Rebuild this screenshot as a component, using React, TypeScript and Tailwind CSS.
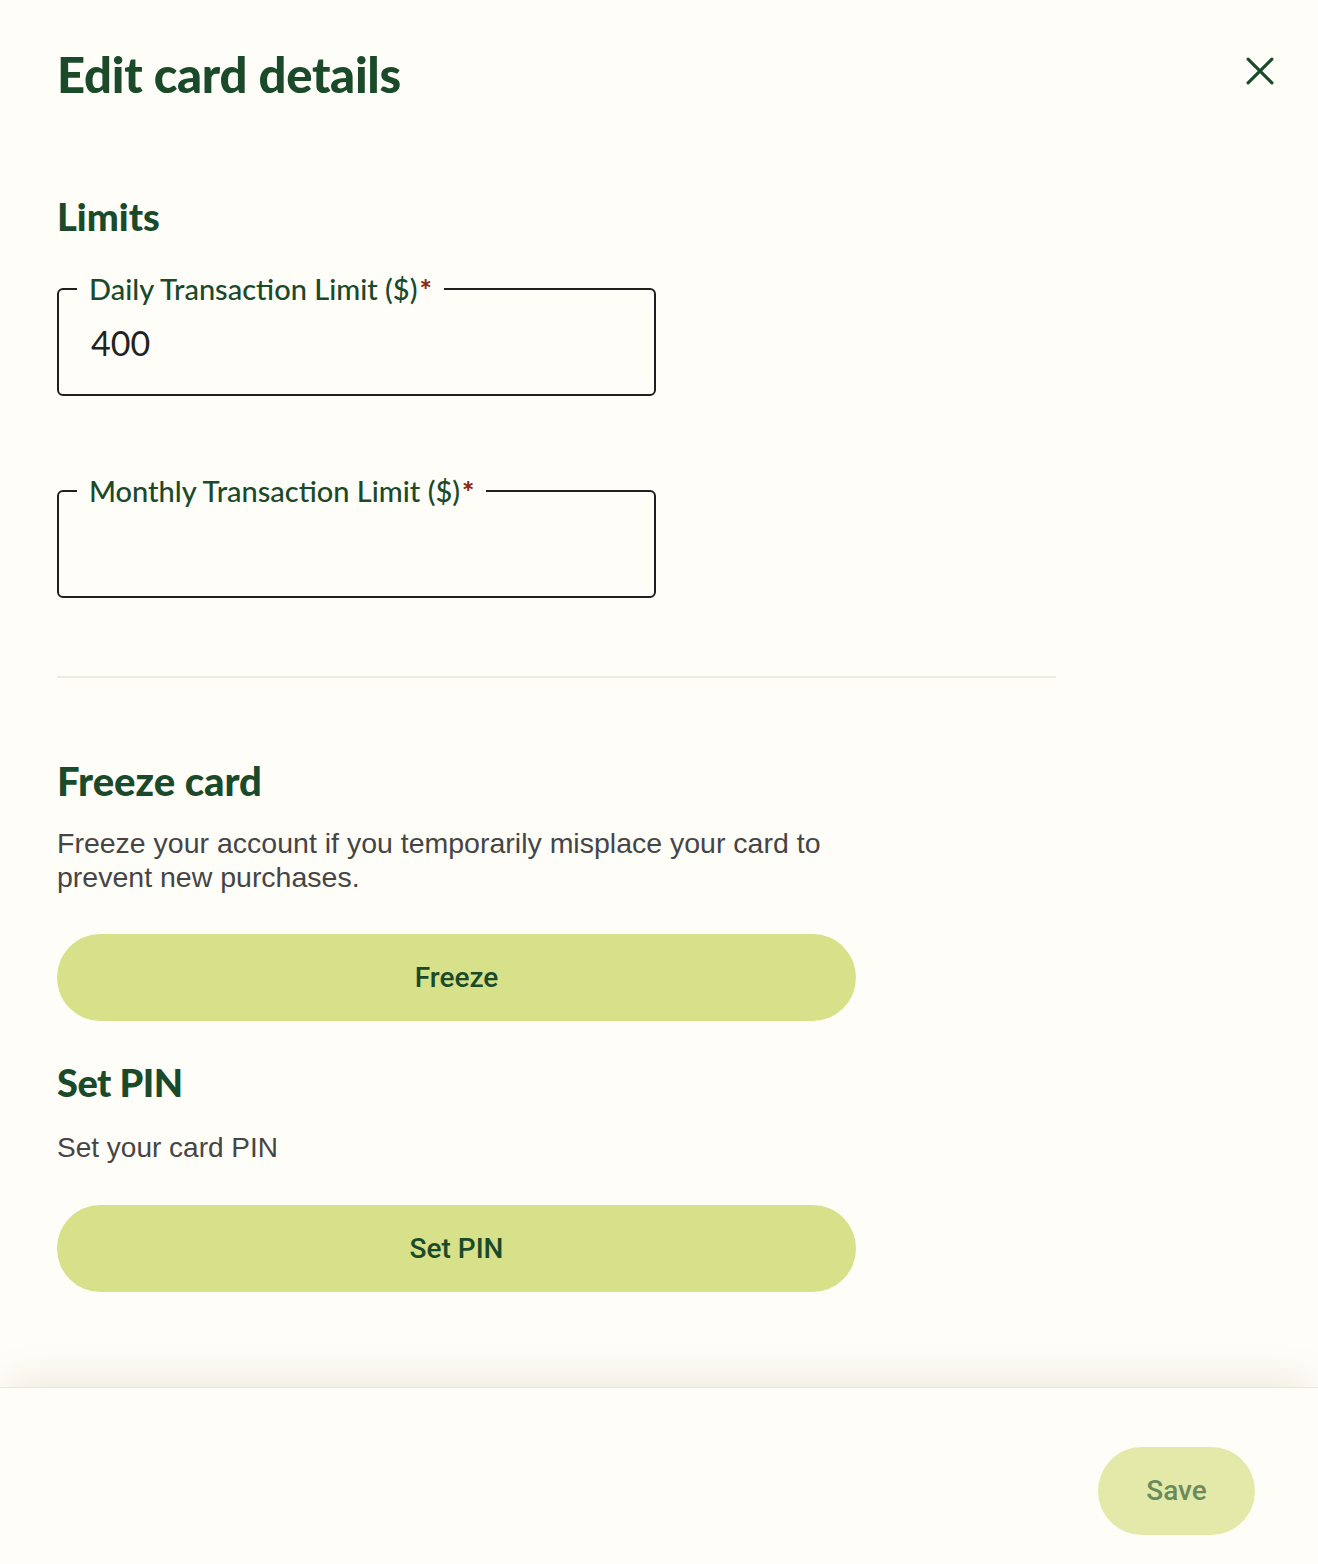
import React, { useState } from 'react';

const GREEN = 'text-[#1a4a2a]';

interface LimitFieldProps {
  label: string;
  value: string;
  onChange: (v: string) => void;
}

const LimitField: React.FC<LimitFieldProps> = ({ label, value, onChange }) => {
  return (
    <fieldset className="w-[599px] h-[122px] rounded-[6px] border-2 border-[#1f1f1f] px-[18px] pb-0 m-0">
      <legend className={`px-[12px] text-[29px] leading-[30px] font-medium ${GREEN} font-['Lato',sans-serif]`}>
        {label}
        <span className="ml-[2px] text-[#8a2a12] text-[29px] font-black">*</span>
      </legend>
      <input
        type="text"
        value={value}
        onChange={(e) => onChange(e.target.value)}
        className="w-full bg-transparent outline-none mt-[13px] pl-[14px] text-[34px] text-[#222] font-['Lato',sans-serif]"
      />
    </fieldset>
  );
};

export default function App() {
  const [daily, setDaily] = useState('400');
  const [monthly, setMonthly] = useState('');

  return (
    <div className="w-[1318px] h-[1564px] bg-[#fefdf8] flex flex-col font-['Liberation_Sans',sans-serif]">
      {/* Scrollable body */}
      <div className="flex-1 px-[57px] pt-[44px]">
        <div className="flex items-start justify-between">
          <h1 className={`text-[49px] leading-[60px] font-black tracking-[-0.3px] ${GREEN} font-['Lato',sans-serif]`}>
            Edit card details
          </h1>
          <button type="button" className={`mt-[5px] mr-[-21px] ${GREEN}`} aria-label="Close">
            <svg width="44" height="44" viewBox="0 0 24 24" fill="none" stroke="currentColor" strokeWidth={1.7} strokeLinecap="round">
              <path d="M5.5 5.5l13 13M18.5 5.5l-13 13" />
            </svg>
          </button>
        </div>

        {/* Limits */}
        <h2 className={`mt-[89px] text-[38px] leading-[46px] font-black ${GREEN} font-['Lato',sans-serif]`}>Limits</h2>
        <div className="mt-[35px] flex flex-col gap-[80px]">
          <LimitField label="Daily Transaction Limit ($)" value={daily} onChange={setDaily} />
          <LimitField label="Monthly Transaction Limit ($)" value={monthly} onChange={setMonthly} />
        </div>

        <div className="mt-[78px] w-[999px] h-[2px] bg-[#efebe0]" />

        {/* Freeze */}
        <h2 className={`mt-[80px] text-[40px] leading-[46px] font-black ${GREEN} font-['Lato',sans-serif]`}>Freeze card</h2>
        <p className="mt-[22px] w-[800px] text-[28.5px] leading-[34px] text-[#454545]">
          Freeze your account if you temporarily misplace your card to prevent new purchases.
        </p>
        <button
          type="button"
          className={`mt-[40px] w-[799px] h-[87px] rounded-full bg-[#d6e189] text-[28px] font-medium ${GREEN} font-['Roboto',sans-serif]`}
        >
          Freeze
        </button>

        {/* PIN */}
        <h2 className={`mt-[38px] text-[38px] leading-[46px] font-black tracking-[-0.5px] ${GREEN} font-['Lato',sans-serif]`}>Set PIN</h2>
        <p className="mt-[26px] text-[28px] leading-[34px] text-[#454545]">Set your card PIN</p>
        <button
          type="button"
          className={`mt-[40px] w-[799px] h-[87px] rounded-full bg-[#d6e189] text-[28px] font-medium ${GREEN} font-['Roboto',sans-serif]`}
        >
          Set PIN
        </button>
      </div>

      {/* Footer */}
      <div className="h-[177px] shrink-0 border-t border-[#ece6d8] shadow-[0_-18px_36px_-10px_rgba(140,120,70,0.14)] flex items-start justify-end pt-[59px] pr-[63px]">
        <button
          type="button"
          disabled
          className="w-[157px] h-[88px] rounded-full bg-[#e3eaa9] text-[28px] font-medium text-[#6b8a5c] font-['Roboto',sans-serif]"
        >
          Save
        </button>
      </div>
    </div>
  );
}
